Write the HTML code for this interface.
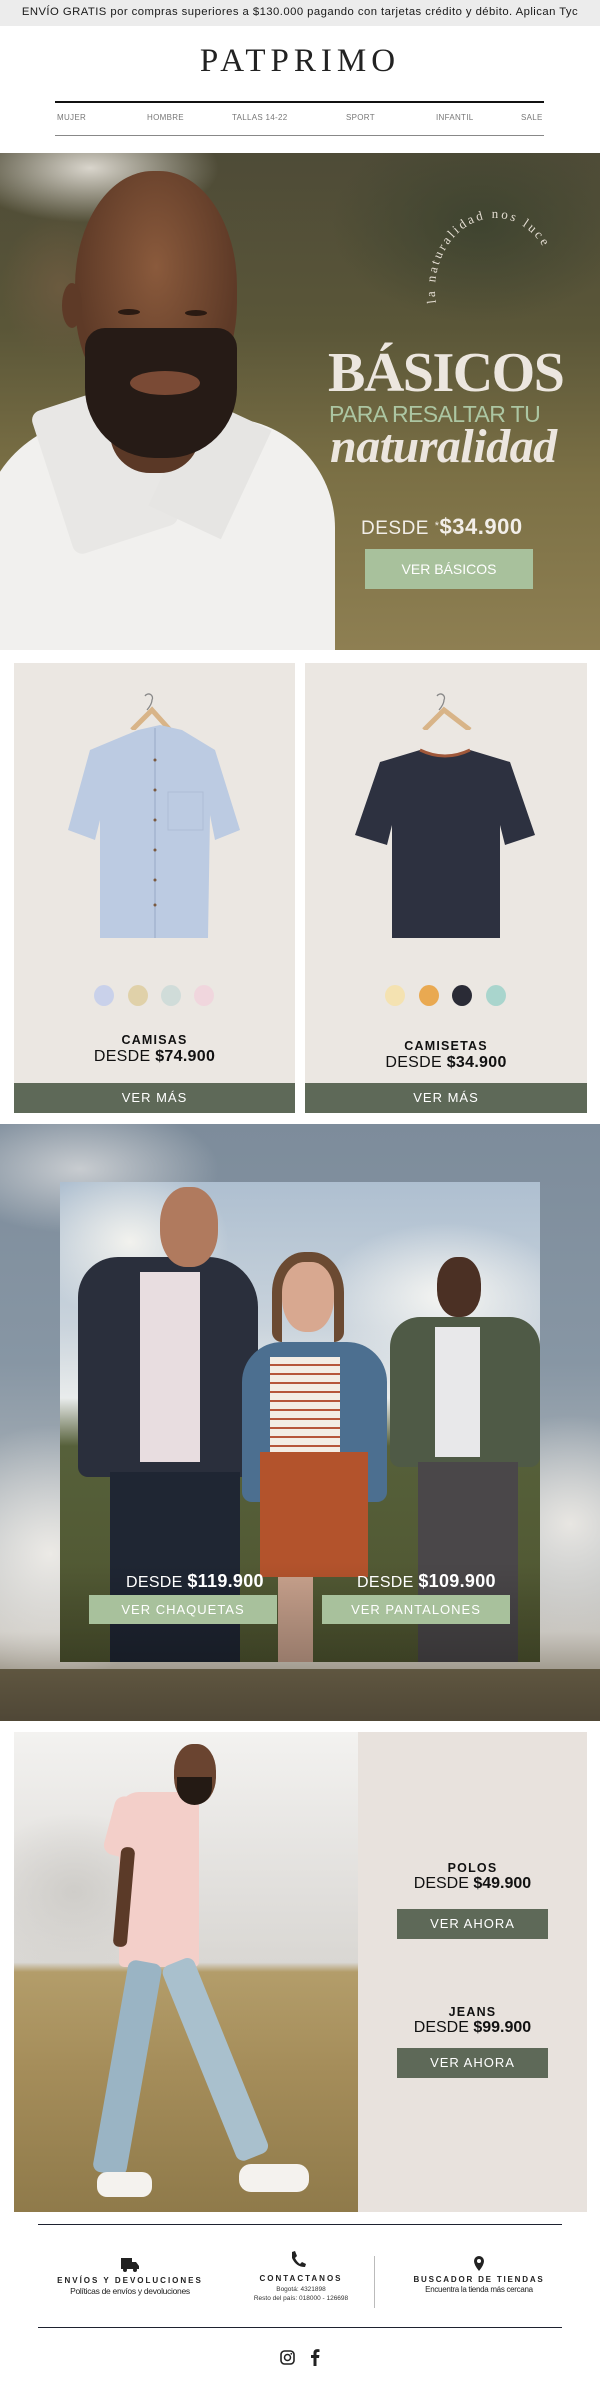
<!DOCTYPE html>
<html><head><meta charset="utf-8"><style>
*{margin:0;padding:0;box-sizing:border-box}
body{width:600px;height:2393px;position:relative;background:#fff;font-family:"Liberation Sans",sans-serif;overflow:hidden}
.a{position:absolute}
.c{text-align:center}
.btn{position:absolute;color:#fff;text-align:center;letter-spacing:1px}
</style></head><body>

<div class="a" style="left:0;top:0;width:600px;height:26px;background:#ececec"></div>
<div class="a c" style="left:0;top:6px;width:600px;font-size:11.3px;letter-spacing:0.45px;color:#1a1a1a;white-space:nowrap">ENVÍO GRATIS por compras superiores a $130.000 pagando con tarjetas crédito y débito. Aplican Tyc</div>

<div class="a c" style="left:0;top:43px;width:600px;font-family:'Liberation Serif',serif;font-size:33px;letter-spacing:5px;color:#222">PATPRIMO</div>

<div class="a" style="left:55px;top:101px;width:489px;height:2px;background:#111"></div>
<div class="a" style="left:55px;top:135px;width:489px;height:1px;background:#888"></div>
<div class="a" style="top:113px;left:0;width:600px;font-size:8px;color:#777;letter-spacing:0.3px">
 <span class="a" style="left:57px">MUJER</span><span class="a" style="left:147px">HOMBRE</span><span class="a" style="left:232px">TALLAS 14-22</span><span class="a" style="left:346px">SPORT</span><span class="a" style="left:436px">INFANTIL</span><span class="a" style="left:521px">SALE</span>
</div>

<div class="a" style="left:0;top:153px;width:600px;height:497px;overflow:hidden;background:linear-gradient(180deg,#4e4b37 0%,#5a5638 35%,#7b7045 65%,#8e7f52 100%)">
 <div class="a" style="left:-40px;top:-40px;width:260px;height:110px;border-radius:50%;background:radial-gradient(#d9d5cc,rgba(200,195,180,0) 70%)"></div>
 <div class="a" style="left:330px;top:-30px;width:300px;height:200px;border-radius:50%;background:radial-gradient(#3f4430,rgba(60,65,45,0) 70%)"></div>
 <div class="a" style="left:0;top:60px;width:120px;height:150px;background:radial-gradient(#6b5a3f,rgba(100,85,60,0) 70%)"></div>
 <div class="a" style="left:-20px;top:265px;width:355px;height:300px;background:#f1f0ee;border-radius:120px 110px 0 0"></div>
 <div class="a" style="left:50px;top:240px;width:110px;height:150px;background:#e8e7e5;transform:rotate(-18deg);border-radius:10px"></div>
 <div class="a" style="left:170px;top:255px;width:80px;height:120px;background:#e6e5e3;transform:rotate(25deg)"></div>
 <div class="a" style="left:110px;top:210px;width:90px;height:110px;background:#5a3826;border-radius:0 0 40px 40px"></div>
 <div class="a" style="left:75px;top:18px;width:162px;height:240px;background:radial-gradient(ellipse at 50% 40%,#8a5a3c,#5e3a27 70%);border-radius:48% 48% 45% 45%"></div>
 <div class="a" style="left:62px;top:130px;width:20px;height:45px;background:#5e3a27;border-radius:50%"></div>
 <div class="a" style="left:85px;top:175px;width:152px;height:130px;background:#261b16;border-radius:20px 20px 70px 70px"></div>
 <div class="a" style="left:130px;top:218px;width:70px;height:24px;background:#7a4a35;border-radius:50%"></div>
 <div class="a" style="left:118px;top:156px;width:22px;height:6px;background:#2a1a12;border-radius:50%"></div>
 <div class="a" style="left:185px;top:157px;width:22px;height:6px;background:#2a1a12;border-radius:50%"></div>
</div>
<svg class="a" style="left:0;top:153px" width="600" height="497">
 <defs><path id="arc" d="M436,150 A60,72 0 1,1 554,150"/></defs>
 <text font-family="Liberation Serif,serif" font-size="13" fill="#e4ddd2" letter-spacing="2.6"><textPath href="#arc">la naturalidad nos luce</textPath></text>
</svg>
<div class="a" style="left:328px;top:343px;width:245px;font-family:'Liberation Serif',serif;font-weight:bold;font-size:56px;color:#ece6df;letter-spacing:-1.5px;line-height:60px">BÁSICOS</div>
<div class="a" style="left:329px;top:401px;width:250px;font-size:23px;color:#acc6a2;letter-spacing:-0.6px;white-space:nowrap">PARA RESALTAR TU</div>
<div class="a" style="left:330px;top:419px;font-family:'Liberation Serif',serif;font-weight:bold;font-style:italic;font-size:48px;color:#ece6df;letter-spacing:-0.5px">naturalidad</div>
<div class="a" style="left:361px;top:514px;font-size:19px;color:#f2eee8;white-space:nowrap;letter-spacing:0.5px">DESDE <span style="font-size:11px;vertical-align:5px">*</span><b style="font-size:22px">$34.900</b></div>
<div class="btn" style="left:365px;top:549px;width:168px;height:40px;line-height:40px;background:#a8c19c;font-size:14px;letter-spacing:0">VER BÁSICOS</div>

<div class="a" style="left:14px;top:663px;width:281px;height:420px;background:#ebe7e2"></div>
<div class="a" style="left:305px;top:663px;width:282px;height:420px;background:#ebe7e2"></div>
<svg class="a" style="left:0;top:690px" width="600" height="40">
 <path d="M147,20 q5,-6 5,-10 a4,4 0 1 0 -7,-4" stroke="#888" fill="none" stroke-width="1.3"/>
 <path d="M439,20 q5,-6 5,-10 a4,4 0 1 0 -7,-4" stroke="#888" fill="none" stroke-width="1.3"/>
 <path d="M132,40 L152,20 L170,40" stroke="#d8b488" fill="none" stroke-width="5"/>
 <path d="M424,40 L444,20 L470,40" stroke="#d8b488" fill="none" stroke-width="5"/>
</svg>
<svg class="a" style="left:60px;top:720px" width="190" height="230">
 <path d="M78,10 L100,5 L122,10 L155,30 L180,110 L155,120 L150,95 L148,218 L40,218 L40,100 L35,120 L8,110 L30,30 Z" fill="#bccbe2"/>
 <path d="M95,8 L95,218" stroke="#a3b4cf" stroke-width="1.5"/>
 <rect x="108" y="72" width="35" height="38" fill="none" stroke="#aebdd5"/>
 <g fill="#7a5a40"><circle cx="95" cy="40" r="1.5"/><circle cx="95" cy="70" r="1.5"/><circle cx="95" cy="100" r="1.5"/><circle cx="95" cy="130" r="1.5"/><circle cx="95" cy="160" r="1.5"/><circle cx="95" cy="185" r="1.5"/></g>
</svg>
<svg class="a" style="left:350px;top:740px" width="190" height="210">
 <path d="M70,10 Q95,22 120,10 L160,22 L185,95 L155,105 L150,85 L150,198 L42,198 L42,85 L37,105 L5,95 L30,22 Z" fill="#2d3140"/>
 <path d="M70,10 Q95,22 120,10" stroke="#a0583a" stroke-width="3" fill="none"/>
</svg>
<div class="a" style="left:94px;top:985px;width:20px;height:21px;border-radius:50%;background:#c9d1ea"></div>
<div class="a" style="left:128px;top:985px;width:20px;height:21px;border-radius:50%;background:#e0d1a9"></div>
<div class="a" style="left:161px;top:985px;width:20px;height:21px;border-radius:50%;background:#d0dcd9"></div>
<div class="a" style="left:194px;top:985px;width:20px;height:21px;border-radius:50%;background:#f0d6dd"></div>
<div class="a" style="left:385px;top:985px;width:20px;height:21px;border-radius:50%;background:#f4e2b1"></div>
<div class="a" style="left:419px;top:985px;width:20px;height:21px;border-radius:50%;background:#e9a951"></div>
<div class="a" style="left:452px;top:985px;width:20px;height:21px;border-radius:50%;background:#2a2b36"></div>
<div class="a" style="left:486px;top:985px;width:20px;height:21px;border-radius:50%;background:#a9d5cd"></div>
<div class="a c" style="left:14px;top:1033px;width:281px;font-size:12.5px;font-weight:bold;letter-spacing:1.2px;color:#111">CAMISAS</div>
<div class="a c" style="left:14px;top:1048px;width:281px;font-size:16px;color:#111;letter-spacing:0.3px">DESDE <b>$74.900</b></div>
<div class="a c" style="left:305px;top:1039px;width:282px;font-size:12.5px;font-weight:bold;letter-spacing:1.2px;color:#111">CAMISETAS</div>
<div class="a c" style="left:305px;top:1054px;width:282px;font-size:16px;color:#111;letter-spacing:0.3px">DESDE <b>$34.900</b></div>
<div class="btn" style="left:14px;top:1083px;width:281px;height:30px;line-height:30px;background:#5e6958;font-size:13px">VER MÁS</div>
<div class="btn" style="left:305px;top:1083px;width:282px;height:30px;line-height:30px;background:#5e6958;font-size:13px">VER MÁS</div>

<div class="a" style="left:0;top:1124px;width:600px;height:597px;overflow:hidden;background:linear-gradient(180deg,#7d8c9b 0%,#8796a4 40%,#b3b9bd 70%,#c9c6c0 85%,#6e634e 100%)">
 <div class="a" style="left:-60px;top:-20px;width:280px;height:130px;border-radius:50%;background:radial-gradient(#c8ccd0,rgba(200,204,208,0) 70%)"></div>
 <div class="a" style="left:-80px;top:300px;width:260px;height:260px;border-radius:50%;background:radial-gradient(#eceae6,rgba(236,234,230,0) 70%)"></div>
 <div class="a" style="left:450px;top:290px;width:240px;height:220px;border-radius:50%;background:radial-gradient(#e8e6e2,rgba(232,230,226,0) 70%)"></div>
 <div class="a" style="left:0;top:545px;width:600px;height:60px;background:linear-gradient(180deg,#5f5640,#4d4535)"></div>
 <div class="a" style="left:60px;top:58px;width:480px;height:480px;overflow:hidden;background:linear-gradient(180deg,#aebfd0 0%,#c9d3dc 30%,#e9ecec 45%,#56603a 55%,#4f5530 100%)">
  <div class="a" style="left:-30px;top:-20px;width:200px;height:160px;border-radius:50%;background:radial-gradient(#f2f2ee,rgba(242,242,238,0) 70%)"></div>
  <div class="a" style="left:260px;top:40px;width:250px;height:150px;border-radius:50%;background:radial-gradient(#f5f5f2,rgba(245,245,242,0) 70%)"></div>
  <div class="a" style="left:18px;top:75px;width:180px;height:220px;background:#2a2f3c;border-radius:40px 50px 10px 10px"></div>
  <div class="a" style="left:80px;top:90px;width:60px;height:190px;background:#e8dde0"></div>
  <div class="a" style="left:50px;top:290px;width:130px;height:190px;background:#1f2633"></div>
  <div class="a" style="left:100px;top:5px;width:58px;height:80px;background:#b07a5e;border-radius:45%"></div>
  <div class="a" style="left:182px;top:160px;width:145px;height:160px;background:#4c6f90;border-radius:40px 40px 10px 10px"></div>
  <div class="a" style="left:210px;top:175px;width:70px;height:100px;background:repeating-linear-gradient(180deg,#f3ece4 0 7px,#b6553a 7px 9px)"></div>
  <div class="a" style="left:200px;top:270px;width:108px;height:125px;background:#b3532c"></div>
  <div class="a" style="left:218px;top:395px;width:35px;height:90px;background:#caa38e"></div>
  <div class="a" style="left:222px;top:75px;width:52px;height:75px;background:#d8a890;border-radius:45%"></div>
  <div class="a" style="left:212px;top:70px;width:72px;height:90px;border-radius:45% 45% 10px 10px;border:10px solid #6b4a32;border-bottom:none"></div>
  <div class="a" style="left:330px;top:135px;width:150px;height:150px;background:#4f5a46;border-radius:30px 30px 10px 10px"></div>
  <div class="a" style="left:375px;top:145px;width:45px;height:130px;background:#e8e8ea"></div>
  <div class="a" style="left:358px;top:280px;width:100px;height:200px;background:#4a4749"></div>
  <div class="a" style="left:377px;top:75px;width:44px;height:60px;background:#4b3024;border-radius:45%"></div>
  <div class="a" style="left:0;top:380px;width:480px;height:100px;background:linear-gradient(180deg,rgba(0,0,0,0),rgba(0,0,0,0.25))"></div>
 </div>
</div>
<div class="a" style="left:126px;top:1571px;font-size:16px;color:#fff;white-space:nowrap;letter-spacing:0.3px">DESDE <b style="font-size:18px">$119.900</b></div>
<div class="a" style="left:357px;top:1571px;font-size:16px;color:#fff;white-space:nowrap;letter-spacing:0.3px">DESDE <b style="font-size:18px">$109.900</b></div>
<div class="btn" style="left:89px;top:1595px;width:188px;height:29px;line-height:29px;background:#a8c19c;font-size:13px">VER CHAQUETAS</div>
<div class="btn" style="left:322px;top:1595px;width:188px;height:29px;line-height:29px;background:#a8c19c;font-size:13px">VER PANTALONES</div>

<div class="a" style="left:14px;top:1732px;width:344px;height:480px;overflow:hidden;background:linear-gradient(180deg,#f3f2f0 0%,#e0dedb 35%,#d9d7d3 48%,#b39d6a 50%,#a58d5a 70%,#8f7a4a 100%)">
 <div class="a" style="left:-40px;top:80px;width:200px;height:160px;border-radius:50%;background:radial-gradient(#cfcdc9,rgba(207,205,201,0) 70%)"></div>
 <div class="a" style="left:105px;top:60px;width:80px;height:175px;background:#f3cfc9;border-radius:20px 10px 5px 5px"></div>
 <div class="a" style="left:95px;top:65px;width:30px;height:60px;background:#f3cfc9;border-radius:10px;transform:rotate(15deg)"></div>
 <div class="a" style="left:103px;top:115px;width:14px;height:100px;background:#5b3a28;border-radius:6px;transform:rotate(5deg)"></div>
 <div class="a" style="left:160px;top:12px;width:42px;height:60px;background:#6a4430;border-radius:45%"></div>
 <div class="a" style="left:163px;top:45px;width:35px;height:28px;background:#241a14;border-radius:0 0 18px 18px"></div>
 <div class="a" style="left:115px;top:230px;width:34px;height:215px;background:#9ab4c4;transform:rotate(10deg);transform-origin:top;border-radius:8px"></div>
 <div class="a" style="left:145px;top:230px;width:34px;height:210px;background:#a9c0cd;transform:rotate(-22deg);transform-origin:top;border-radius:8px"></div>
 <div class="a" style="left:83px;top:440px;width:55px;height:25px;background:#f4f2ee;border-radius:10px"></div>
 <div class="a" style="left:225px;top:432px;width:70px;height:28px;background:#f4f2ee;border-radius:12px"></div>
</div>
<div class="a" style="left:358px;top:1732px;width:229px;height:480px;background:#e8e2dd"></div>
<div class="a c" style="left:358px;top:1861px;width:229px;font-size:12.5px;font-weight:bold;letter-spacing:1.2px;color:#111">POLOS</div>
<div class="a c" style="left:358px;top:1875px;width:229px;font-size:16px;color:#111">DESDE <b>$49.900</b></div>
<div class="btn" style="left:397px;top:1909px;width:151px;height:30px;line-height:30px;background:#5e6958;font-size:13px">VER AHORA</div>
<div class="a c" style="left:358px;top:2005px;width:229px;font-size:12.5px;font-weight:bold;letter-spacing:1.2px;color:#111">JEANS</div>
<div class="a c" style="left:358px;top:2019px;width:229px;font-size:16px;color:#111">DESDE <b>$99.900</b></div>
<div class="btn" style="left:397px;top:2048px;width:151px;height:30px;line-height:30px;background:#5e6958;font-size:13px">VER AHORA</div>

<div class="a" style="left:38px;top:2224px;width:524px;height:1px;background:#1e2230"></div>
<div class="a" style="left:38px;top:2327px;width:524px;height:1px;background:#1e2230"></div>
<div class="a" style="left:374px;top:2256px;width:1px;height:52px;background:#bbb"></div>
<svg class="a" style="left:121px;top:2258px" width="19" height="14"><path d="M0,0 H11 V11 H0Z M11,4 H15 L18,8 V11 H11Z" fill="#222"/><circle cx="4" cy="12" r="2" fill="#222"/><circle cx="14" cy="12" r="2" fill="#222"/></svg>
<svg class="a" style="left:290px;top:2251px" width="16" height="17"><path d="M2,1 L5,0 L7,5 L5,7 Q7,11 10,13 L12,11 L16,13 L15,16 Q6,16 2,7 Z" fill="#222"/></svg>
<svg class="a" style="left:474px;top:2256px" width="10" height="15"><path d="M5,0 A5,5 0 0 1 10,5 Q10,9 5,15 Q0,9 0,5 A5,5 0 0 1 5,0Z" fill="#222"/><circle cx="5" cy="5" r="2" fill="#fff"/></svg>
<div class="a c" style="left:40px;top:2276px;width:180px;font-size:8px;font-weight:bold;letter-spacing:2px;color:#222">ENVÍOS Y DEVOLUCIONES</div>
<div class="a c" style="left:40px;top:2286px;width:180px;font-size:8.5px;color:#222;letter-spacing:-0.3px">Políticas de envíos y devoluciones</div>
<div class="a c" style="left:240px;top:2274px;width:122px;font-size:8px;font-weight:bold;letter-spacing:2px;color:#222">CONTACTANOS</div>
<div class="a c" style="left:240px;top:2286px;width:122px;font-size:6.5px;color:#333">Bogotá: 4321898</div>
<div class="a c" style="left:240px;top:2295px;width:122px;font-size:6.5px;color:#333;white-space:nowrap">Resto del país: 018000 - 126698</div>
<div class="a c" style="left:400px;top:2275px;width:158px;font-size:8px;font-weight:bold;letter-spacing:1.8px;color:#222">BUSCADOR DE TIENDAS</div>
<div class="a c" style="left:400px;top:2285px;width:158px;font-size:8px;color:#222;letter-spacing:-0.3px">Encuentra la tienda más cercana</div>
<svg class="a" style="left:280px;top:2350px" width="16" height="16"><rect x="1" y="1" width="13" height="13" rx="3.5" fill="none" stroke="#222" stroke-width="1.6"/><circle cx="7.5" cy="7.5" r="3" fill="none" stroke="#222" stroke-width="1.5"/><circle cx="11.3" cy="3.8" r="0.9" fill="#222"/></svg>
<svg class="a" style="left:310px;top:2349px" width="10" height="17"><path d="M6.5,17 V9 H9 L9.4,6 H6.5 V4.3 Q6.5,3 7.8,3 H9.5 V0.3 Q8.5,0.1 7.3,0.1 Q3.5,0.1 3.5,4 V6 H1 V9 H3.5 V17Z" fill="#222"/></svg>

</body></html>
